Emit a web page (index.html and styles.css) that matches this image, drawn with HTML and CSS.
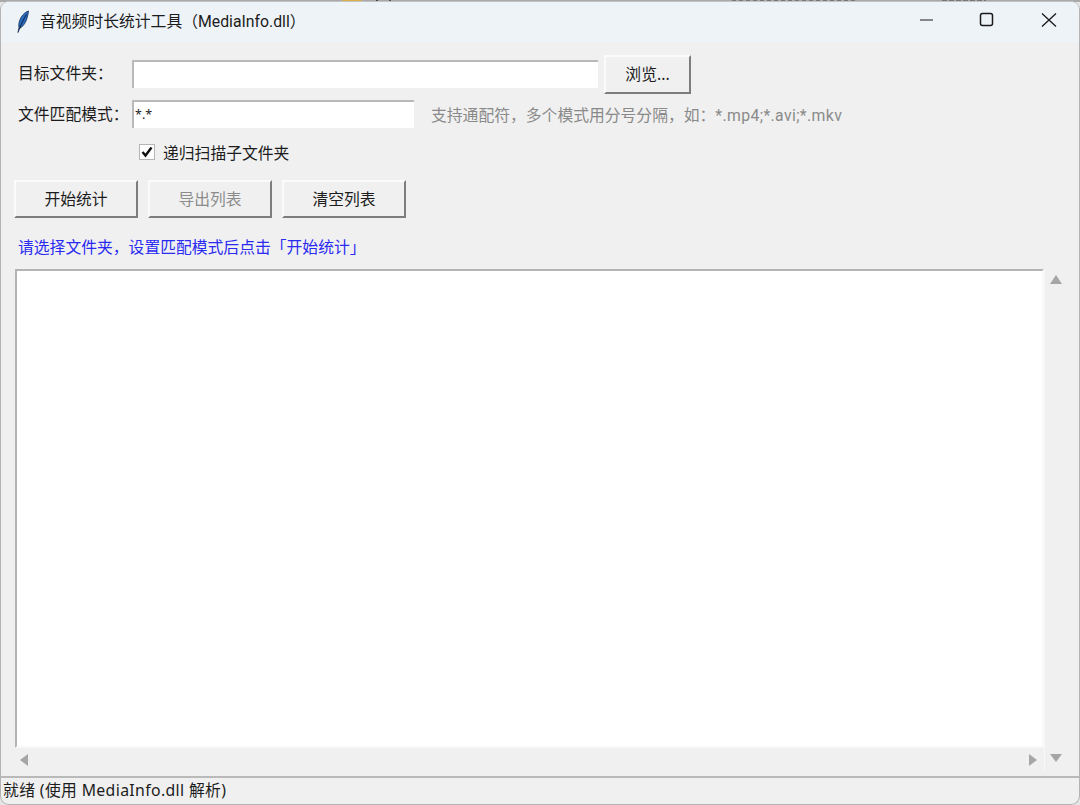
FILE: index.html
```html
<!DOCTYPE html>
<html lang="zh-CN">
<head>
<meta charset="utf-8">
<title>音视频时长统计工具（MediaInfo.dll）</title>
<link rel="stylesheet" href="styles.css">
</head>
<body>
<div class="desktop">
  <span class="peek peek-folder"></span>
  <span class="peek peek-tick-a"></span>
  <span class="peek peek-tick-b"></span>
  <span class="peek peek-text-a"></span>
  <span class="peek peek-text-b"></span>
</div>
<div class="window">
  <header class="titlebar">
    <svg class="feather" width="16" height="24" viewBox="0 0 16 24"><path d="M13.500 1C10 2 6 6 4.500 11 3.800 13.500 3.500 15.500 4 17.500L3 22.500l1.800-4.500C9 16.500 12.500 10 13.500 1z" fill="#2a6cc4" stroke="#16304f" stroke-width=".8"/><path d="M11.500 4.500C9 8.500 6.500 13 4.500 19" stroke="#0f2238" stroke-width="1" fill="none"/></svg>
    <span class="title">音视频时长统计工具（MediaInfo.dll）</span>
    <div class="wincontrols">
      <svg class="wc" width="62" height="42" viewBox="0 0 62 42"><path d="M27 19H40" stroke="#1a1a1a" stroke-width="1.200"/></svg>
      <svg class="wc" width="62" height="42" viewBox="0 0 62 42"><rect x="25.500" y="12.500" width="12" height="12" rx="2" fill="none" stroke="#1a1a1a" stroke-width="1.500"/></svg>
      <svg class="wc" width="62" height="42" viewBox="0 0 62 42"><path d="M25 12.500L39 25.500M39 12.500L25 25.500" stroke="#1a1a1a" stroke-width="1.300"/></svg>
    </div>
  </header>
  <main class="content">
    <div class="row row-folder">
      <label class="field-label lifted">目标文件夹：</label>
      <div class="entry entry-long"></div>
      <button class="btn btn-browse">浏览...</button>
    </div>
    <div class="row row-pattern">
      <label class="field-label">文件匹配模式：</label>
      <div class="entry entry-short">*.*</div>
      <span class="hint">支持通配符，多个模式用分号分隔，如：<span class="hint-latin">*.mp4;*.avi;*.mkv</span></span>
    </div>
    <div class="row row-check">
      <span class="checkbox"><svg width="12" height="12" viewBox="0 0 12 12"><path d="M1.500 6l3 3.500L10.500 1.500" fill="none" stroke="#111" stroke-width="2.400"/></svg></span>
      <span class="check-label">递归扫描子文件夹</span>
    </div>
    <div class="row row-actions">
      <button class="btn btn-action">开始统计</button>
      <button class="btn btn-action disabled">导出列表</button>
      <button class="btn btn-action">清空列表</button>
    </div>
    <p class="notice">请选择文件夹，设置匹配模式后点击「开始统计」</p>
    <div class="list-area">
      <div class="list-col">
        <div class="listbox"></div>
        <div class="hscroll">
          <span class="arrow arrow-left"></span>
          <span class="arrow arrow-right"></span>
        </div>
      </div>
      <div class="vscroll">
        <span class="arrow arrow-up"></span>
        <span class="arrow arrow-down"></span>
      </div>
    </div>
  </main>
  <footer class="status">就绪 (使用 MediaInfo.dll 解析)</footer>
</div>
</body>
</html>
```
FILE: styles.css
```css
* { box-sizing: border-box; }
html, body { margin: 0; height: 100%; background: #e6e6e6; overflow: hidden; }
body { font-family: "Noto Sans", "Noto Sans CJK SC", sans-serif; font-size: 15.800px; color: #1c1c1c; }
.desktop { position: absolute; top: 0; left: 0; width: 1080px; height: 2px; background: #a9a9a9; }
.peek { position: absolute; top: 0; height: 2px; }
.peek-folder { left: 342px; width: 20px; background: #d9b04a; }
.peek-tick-a { left: 376px; width: 2px; background: #444; }
.peek-tick-b { left: 389px; width: 2px; background: #555; }
.peek-text-a { left: 732px; width: 126px; background: repeating-linear-gradient(90deg, #777 0 4px, transparent 4px 7px); }
.peek-text-b { left: 942px; width: 44px; background: repeating-linear-gradient(90deg, #777 0 5px, transparent 5px 7px); }
.window {
  position: relative; display: flex; flex-direction: column; overflow: hidden;
  background: #f0f0f0; border: 1px solid #b4b4b4; border-top-color: #c4c4c4;
  border-radius: 9px; margin-top: 1px; height: 804px;
}
.titlebar { flex: none; height: 40px; display: flex; align-items: center; background: #eef3f8; padding: 0 0 1px 14px; }
.feather { flex: none; }
.title { margin-left: 9px; font-family: Roboto, "Noto Sans CJK SC", sans-serif; font-size: 15.800px; line-height: 20px; white-space: nowrap; }
.wincontrols { margin-left: auto; display: flex; }
.wc { display: block; }
.content { flex: 1; min-height: 0; display: flex; flex-direction: column; padding: 0 0 0 13px; }
.row { display: flex; align-items: center; }
.row-folder { margin-top: 12px; height: 40px; }
.row-pattern { margin-top: 5px; height: 30px; }
.field-label { width: 118px; padding-left: 4px; line-height: 20px; white-space: nowrap; }
.field-label.lifted { padding-bottom: 2px; }
.entry { height: 28px; background: #fff; border-top: 2px solid #b9b9b9; border-left: 2px solid #b9b9b9; font-size: 12.500px; line-height: 26px; padding-left: 1px; }
.entry-long { width: 466px; }
.entry-short { width: 282px; }
.btn {
  font: inherit; color: #1c1c1c; background: #f0f0f0; padding: 0 0 2px; cursor: default;
  border-top: 2px solid #fbfbfb; border-left: 2px solid #fbfbfb; border-right: 2px solid #7d7d7d; border-bottom: 2px solid #7d7d7d;
}
.btn-browse { width: 87px; height: 39px; margin-left: 6px; }
.hint { margin-left: 17px; font-family: Roboto, "Noto Sans CJK SC", sans-serif; color: #8a8a8a; white-space: nowrap; }
.hint-latin { letter-spacing: .36px; }
.row-check { margin-top: 8px; height: 30px; padding-left: 125px; }
.checkbox { width: 16px; height: 16px; background: #fff; border: 1px solid #b5b5b5; display: flex; align-items: center; justify-content: center; }
.check-label { margin-left: 8px; white-space: nowrap; }
.row-actions { margin-top: 13px; gap: 10px; }
.btn-action { width: 124px; height: 38px; }
.btn-action.disabled { color: #8c8c8c; }
.notice { margin: 18px 0 0 4px; height: 22px; line-height: 22px; color: #2a2af0; white-space: nowrap; }
.list-area { flex: 1; min-height: 0; display: flex; margin: 11px 0 0 1px; padding-bottom: 5px; }
.list-col { width: 1037px; display: flex; flex-direction: column; }
.listbox { height: 479px; width: 1029px; background: #fff; border-top: 2px solid #b4b4b4; border-left: 2px solid #b4b4b4; border-right: 2px solid #f8f8f8; border-bottom: 2px solid #f8f8f8; flex: none; }
.hscroll { flex: 1; width: 1028px; display: flex; align-items: center; justify-content: space-between; padding: 0 6px 0 5px; }
.vscroll { flex: none; width: 23px; margin-left: -8px; display: flex; flex-direction: column; justify-content: space-between; align-items: center; padding: 6px 0 9px; border-left: 1px solid #f8f8f8; }
.arrow { width: 0; height: 0; display: block; border-style: solid; border-color: transparent; }
.arrow-left { border-width: 6px 8px 6px 0; border-right-color: #a6a6a6; }
.arrow-right { border-width: 6px 0 6px 8px; border-left-color: #a6a6a6; }
.arrow-up { border-width: 0 6px 9px; border-bottom-color: #a6a6a6; }
.arrow-down { border-width: 8px 6px 0; border-top-color: #a6a6a6; }
.status { flex: none; height: 28px; border-top: 2px solid #b9b9b9; padding-left: 2px; line-height: 25px; white-space: nowrap; letter-spacing: .36px; }
```
